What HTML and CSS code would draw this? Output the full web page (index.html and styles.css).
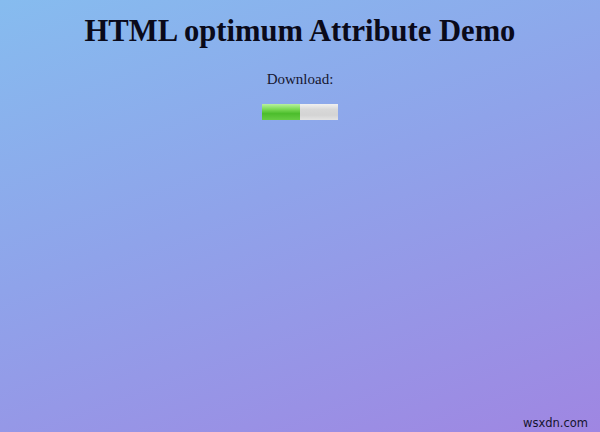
FILE: index.html
```html
<!DOCTYPE html>
<html>
<head>
<meta charset="utf-8">
<link rel="stylesheet" href="styles.css">
</head>
<body>
<div class="page">
  <h1 class="title">HTML optimum Attribute Demo</h1>
  <p class="label">Download:</p>
  <div class="meter"><div class="meter-fill" style="width:50%"></div></div>
  <span class="watermark">wsxdn.com</span>
</div>
</body>
</html>
```
FILE: styles.css
```css
html, body {
  margin: 0;
  padding: 0;
  height: 100%;
}
body {
  font-family: "Liberation Serif", "Times New Roman", serif;
  color: #000;
}
.page {
  position: relative;
  width: 600px;
  height: 432px;
  background: linear-gradient(160deg, #86bcef 0%, #8fa3ea 45%, #9f86e2 100%);
  display: flex;
  flex-direction: column;
  align-items: center;
  overflow: hidden;
}
.title {
  font-size: 30.6px;
  font-weight: bold;
  margin: 13px 0 0 0;
  line-height: 36px;
  color: #0a0a1a;
}
.label {
  font-size: 15px;
  margin: 22px 0 0 0;
  line-height: 17px;
  color: #161630;
}
.meter {
  margin-top: 16px;
  width: 76px;
  height: 16px;
  background: linear-gradient(to bottom, #f0f0f0 0%, #d8d8d8 35%, #d4d4d4 70%, #e4e4e4 100%);
  display: flex;
}
.meter-fill {
  height: 100%;
  background: linear-gradient(to bottom, #b8f0a0 0%, #7fdc5a 30%, #4cbd2c 60%, #66cc44 100%);
}
.watermark {
  position: absolute;
  right: 12px;
  bottom: 2px;
  font-family: "DejaVu Sans", sans-serif;
  font-size: 11.5px;
  line-height: 13px;
  color: #14142e;
}
```
